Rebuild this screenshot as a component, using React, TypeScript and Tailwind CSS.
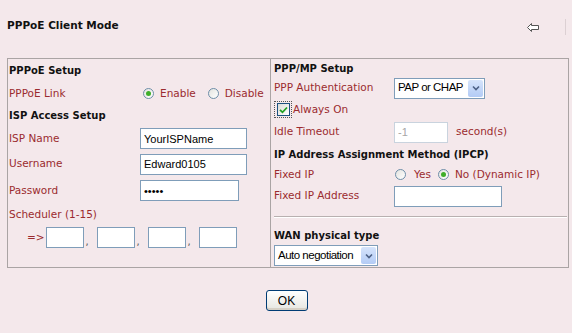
import React from 'react';

const label = "text-[10.5px] text-[#9b2b2f]";
const head = "text-[10px] font-bold text-[#111]";
const field = "h-[21px] border bg-white px-[3px] text-[11px] font-['Liberation_Sans',Arial,sans-serif] outline-none";
const input = `${field} border-[#7f9db9] text-black`;

function Radio({ on }: { on?: boolean }) {
  return (
    <span className="inline-flex h-[11px] w-[11px] items-center justify-center rounded-full border border-[#6e8ea8] bg-gradient-to-br from-[#e3e3df] to-white">
      {on && <span className="h-[5px] w-[5px] rounded-full bg-[#3fae2a]" />}
    </span>
  );
}

function Select({ text, width }: { text: string; width: string }) {
  return (
    <div className={`flex h-[21px] items-center border border-[#7f9db9] bg-white ${width}`}>
      <span className="flex-1 overflow-hidden whitespace-nowrap pl-[3px] text-[11.5px] font-['Liberation_Sans',Arial,sans-serif] tracking-[-0.5px] text-black">
        {text}
      </span>
      <span className="mr-[1px] flex h-[17px] w-[15px] shrink-0 items-center justify-center rounded-[2px] bg-gradient-to-b from-[#d6e4fb] to-[#b3cbf5]">
        <svg width="8" height="6" viewBox="0 0 8 6">
          <path d="M1 1.5 L4 4.5 L7 1.5" fill="none" stroke="#4d6185" strokeWidth="1.6" />
        </svg>
      </span>
    </div>
  );
}

export default function App() {
  return (
    <div className="min-h-[333px] w-[572px] bg-[#f4e8eb] font-['DejaVu_Sans',Verdana,sans-serif]">
      <div className="flex h-[58px] items-start justify-between pl-[7px] pr-[6px] pt-[18px]">
        <h1 className="text-[10.5px] font-bold text-[#111]">PPPoE Client Mode</h1>
        <div className="flex items-center gap-[26px] pt-[1px]">
          <svg width="12" height="9" viewBox="0 0 12 9">
            <path d="M0.5 4.5 L4.5 0.5 L4.5 2.5 L11.5 2.5 L11.5 6.5 L4.5 6.5 L4.5 8.5 Z" fill="white" stroke="#555" strokeWidth="1" />
          </svg>
          <span className="h-[16px] w-[1px] bg-[#dcd0d3]" />
        </div>
      </div>

      <div className="ml-[7px] mr-[3px] grid h-[210px] grid-cols-[262px_1fr] border border-[#aaa4a4]">
        {/* left column */}
        <div className="flex flex-col pl-[1px]">
          <div className={`flex h-[23px] items-center ${head}`}>PPPoE Setup</div>
          <div className="grid h-[23px] grid-cols-[134px_1fr] items-center">
            <span className={label}>PPPoE Link</span>
            <div className="flex items-center">
              <Radio on />
              <span className={`ml-[6px] ${label}`}>Enable</span>
              <span className="ml-[12px] flex"><Radio /></span>
              <span className={`ml-[6px] ${label}`}>Disable</span>
            </div>
          </div>
          <div className={`flex h-[21px] items-center ${head}`}>ISP Access Setup</div>
          <div className="grid h-[25px] grid-cols-[131px_1fr] items-center">
            <span className={label}>ISP Name</span>
            <input className={`${input} w-[107px]`} defaultValue="YourISPName" readOnly />
          </div>
          <div className="grid h-[26px] grid-cols-[131px_1fr] items-center">
            <span className={label}>Username</span>
            <input className={`${input} w-[107px]`} defaultValue="Edward0105" readOnly />
          </div>
          <div className="grid h-[27px] grid-cols-[131px_1fr] items-center">
            <span className={label}>Password</span>
            <input type="password" className={`${input} w-[99px]`} defaultValue="abcde" readOnly />
          </div>
          <div className={`flex h-[21px] items-center ${label}`}>Scheduler (1-15)</div>
          <div className="flex h-[25px] items-center pl-[18px]">
            <span className={`mr-[1px] ${label}`}>=&gt;</span>
            {[0, 1, 2, 3].map((i) => (
              <React.Fragment key={i}>
                <input className={`${input} h-[20px] w-[38px]`} readOnly />
                {i < 3 && <span className="w-[13px] self-end pb-[1px] pl-[2px] text-[10px] text-[#555]">,</span>}
              </React.Fragment>
            ))}
          </div>
        </div>

        {/* right column */}
        <div className="flex flex-col border-l border-[#aaa4a4] pl-[3px] pr-[1px]">
          <div className={`flex h-[18px] items-center ${head}`}>PPP/MP Setup</div>
          <div className="grid h-[22px] grid-cols-[120px_1fr] items-center">
            <span className={label}>PPP Authentication</span>
            <Select text="PAP or CHAP" width="w-[91px]" />
          </div>
          <div className="flex h-[21px] items-center">
            <span className="flex h-[17px] w-[18px] items-center justify-center outline outline-1 outline-dotted outline-[#555] -outline-offset-1">
              <span className="flex h-[13px] w-[13px] items-center justify-center border border-[#1c5180] bg-gradient-to-br from-[#dcdcd7] to-white">
                <svg width="9" height="8" viewBox="0 0 9 8">
                  <path d="M1 3.8 L3.5 6.3 L8 1.5" fill="none" stroke="#21a121" strokeWidth="1.8" />
                </svg>
              </span>
            </span>
            <span className={`ml-[1px] ${label}`}>Always On</span>
          </div>
          <div className="grid h-[24px] grid-cols-[120px_54px_1fr] items-center">
            <span className={label}>Idle Timeout</span>
            <input className={`${field} w-[54px] border-[#c9d3de] text-[#a6a6a6]`} defaultValue="-1" readOnly />
            <span className={`ml-[8px] ${label}`}>second(s)</span>
          </div>
          <div className={`flex h-[20px] items-center ${head}`}>IP Address Assignment Method (IPCP)</div>
          <div className="grid h-[21px] grid-cols-[121px_1fr] items-center">
            <span className={label}>Fixed IP</span>
            <div className="flex items-center">
              <Radio />
              <span className={`ml-[8px] ${label}`}>Yes</span>
              <span className="ml-[7px] flex"><Radio on /></span>
              <span className={`ml-[6px] ${label}`}>No (Dynamic IP)</span>
            </div>
          </div>
          <div className="grid h-[22px] grid-cols-[120px_1fr] items-center">
            <span className={label}>Fixed IP Address</span>
            <input className={`${input} h-[20px] w-[108px]`} readOnly />
          </div>
          <div className="mt-[9px] border-t border-[#b8b0b0] shadow-[0_1px_0_#fff]" />
          <div className={`mt-[9px] flex h-[19px] items-center ${head} text-[10.5px]`}>WAN physical type</div>
          <Select text="Auto negotiation" width="w-[104px]" />
        </div>
      </div>

      <div className="flex justify-center pt-[22px] pl-[1px]">
        <button className="h-[21px] w-[42px] rounded-[3px] border border-[#003c74] bg-gradient-to-b from-white to-[#e6e6e0] text-[12px] font-['Liberation_Sans',Arial,sans-serif] text-black shadow-[inset_0_-2px_0_#d6d0c5]">
          OK
        </button>
      </div>
    </div>
  );
}
